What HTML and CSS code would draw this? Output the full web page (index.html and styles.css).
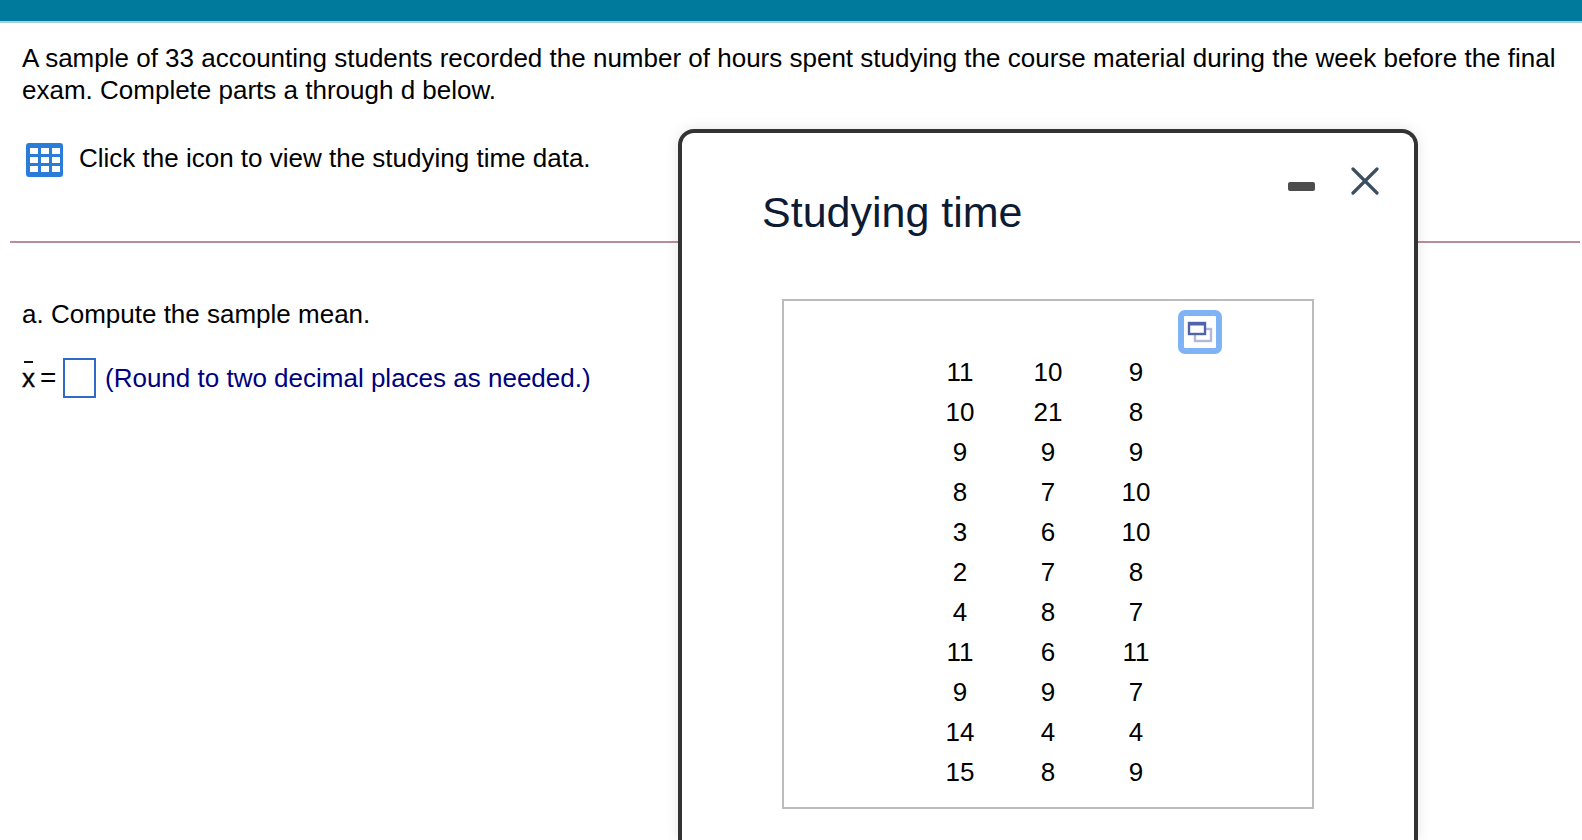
FILE: index.html
```html
<!DOCTYPE html>
<html>

<head>
    <title>Studying time</title>
    <meta charset="utf-8">
    <meta name="viewport" content="width=device-width, initial-scale=1.0">
    <link rel="stylesheet" href="styles.css">
</head>

<body>

    <header class="topbar"></header>

    <main class="spoergsmaal">
        <p class="intro">A sample of 33 accounting students recorded the number of hours spent studying the course material during the week before the final exam. Complete parts a through d below.</p>

        <div class="dataLink">
            <svg class="tabelIkon" viewBox="0 0 37 34" width="37" height="34">
                <rect width="37" height="34" rx="3" fill="#2b7bd8" />
                <g fill="#fff">
                    <rect x="4" y="5" width="8" height="6" />
                    <rect x="15" y="5" width="8" height="6" />
                    <rect x="26" y="5" width="8" height="6" />
                    <rect x="4" y="14" width="8" height="6" />
                    <rect x="15" y="14" width="8" height="6" />
                    <rect x="26" y="14" width="8" height="6" />
                    <rect x="4" y="23" width="8" height="6" />
                    <rect x="15" y="23" width="8" height="6" />
                    <rect x="26" y="23" width="8" height="6" />
                </g>
            </svg>
            <span class="linkTekst">Click the icon to view the studying time data.</span>
        </div>

        <hr class="skille">

        <p class="del">a. Compute the sample mean.</p>

        <div class="svar">
            <span class="xbar">x</span>
            <span class="lig">=</span>
            <span class="felt"></span>
            <span class="hint">(Round to two decimal places as needed.)</span>
        </div>
    </main>

    <section class="popup">
        <div class="knapper">
            <span class="minimer"></span>
            <svg class="luk" viewBox="0 0 28 28" width="28" height="28">
                <path d="M2 2 L26 26 M26 2 L2 26" stroke="#3c4f5f" stroke-width="3.2" stroke-linecap="round" fill="none" />
            </svg>
        </div>

        <h2>Studying time</h2>

        <div class="databoks">
            <svg class="udvid" viewBox="0 0 44 44" width="44" height="44">
                <rect x="3" y="3" width="38" height="38" rx="4" fill="#fff" stroke="#80b3f6" stroke-width="6" />
                <rect x="17" y="19" width="16" height="12" fill="none" stroke="#b0b8dc" stroke-width="2.4" />
                <rect x="11" y="13" width="16" height="11" fill="#fff" stroke="#4f63aa" stroke-width="2.4" />
                <rect x="11" y="13" width="16" height="2.5" fill="#4f63aa" />
            </svg>
            <table>
                <tr><td>11</td><td>10</td><td>9</td></tr>
                <tr><td>10</td><td>21</td><td>8</td></tr>
                <tr><td>9</td><td>9</td><td>9</td></tr>
                <tr><td>8</td><td>7</td><td>10</td></tr>
                <tr><td>3</td><td>6</td><td>10</td></tr>
                <tr><td>2</td><td>7</td><td>8</td></tr>
                <tr><td>4</td><td>8</td><td>7</td></tr>
                <tr><td>11</td><td>6</td><td>11</td></tr>
                <tr><td>9</td><td>9</td><td>7</td></tr>
                <tr><td>14</td><td>4</td><td>4</td></tr>
                <tr><td>15</td><td>8</td><td>9</td></tr>
            </table>
        </div>
    </section>

</body>

</html>
```

FILE: styles.css
```css
html,
body {
    height: 840px;
    overflow: hidden;
}

body {
    margin: 0;
    background-color: #fff;
    color: #000;
    font-family: "Liberation Sans", Arial, sans-serif;
    font-size: 26px;
}

.topbar {
    height: 21px;
    background-color: #007a9c;
    border-bottom: 2px solid #a9cfdb;
}

.spoergsmaal {
    padding: 19px 2px 0 10px;
}

.intro {
    margin: 0 0 0 12px;
    line-height: 32px;
}

/* icon + link text */
.dataLink {
    display: flex;
    align-items: center;
    gap: 16px;
    margin: 37px 0 0 16px;
}

.tabelIkon {
    filter: blur(0.6px);
}

.linkTekst {
    margin-bottom: 4px;
    line-height: 30px;
}

.skille {
    margin: 64px 0 0 0;
    border: 0;
    height: 2px;
    background-color: #bb8c9c;
}

.del {
    margin: 55px 0 0 12px;
    line-height: 32px;
}

.svar {
    display: flex;
    align-items: center;
    margin: 28px 0 0 12px;
}

.xbar {
    position: relative;
    width: 18px;
    -webkit-text-stroke: 0.4px #000;
}

.xbar::before {
    content: "";
    position: absolute;
    top: -2px;
    left: 2px;
    width: 9px;
    height: 2px;
    background-color: #111;
}

.lig {
    width: 23px;
    font-size: 28px;
}

.felt {
    box-sizing: border-box;
    width: 33px;
    height: 40px;
    border: 2px solid #2f6ac8;
}

.hint {
    margin-left: 9px;
    color: #000080;
}

/* POPUP */

.popup {
    position: absolute;
    top: 129px;
    left: 678px;
    box-sizing: border-box;
    width: 740px;
    height: 711px;
    padding: 0 0 0 80px;
    background-color: #fff;
    border: 4px solid #333;
    border-bottom: 0;
    border-radius: 16px 16px 0 0;
    box-shadow: 0 0 14px rgba(0, 0, 0, 0.1);
}

.knapper {
    position: absolute;
    top: 34px;
    right: 35px;
    display: flex;
    align-items: center;
    gap: 36px;
}

.minimer {
    width: 27px;
    height: 9px;
    margin-top: 10px;
    border-radius: 2px;
    background-color: #4d4d4d;
}

.luk {
    display: block;
}

h2 {
    margin: 0;
    padding-top: 54px;
    color: #0d1b33;
    font-size: 43px;
    font-weight: normal;
    line-height: 50px;
}

.databoks {
    position: relative;
    box-sizing: border-box;
    width: 532px;
    height: 510px;
    margin: 62px 0 0 20px;
    padding-top: 51px;
    border: 2px solid #bbb;
}

.udvid {
    position: absolute;
    top: 9px;
    left: 394px;
}

table {
    border-collapse: collapse;
    margin-left: 132px;
}

td {
    width: 88px;
    height: 40.1px;
    padding: 0;
    text-align: center;
}
```
